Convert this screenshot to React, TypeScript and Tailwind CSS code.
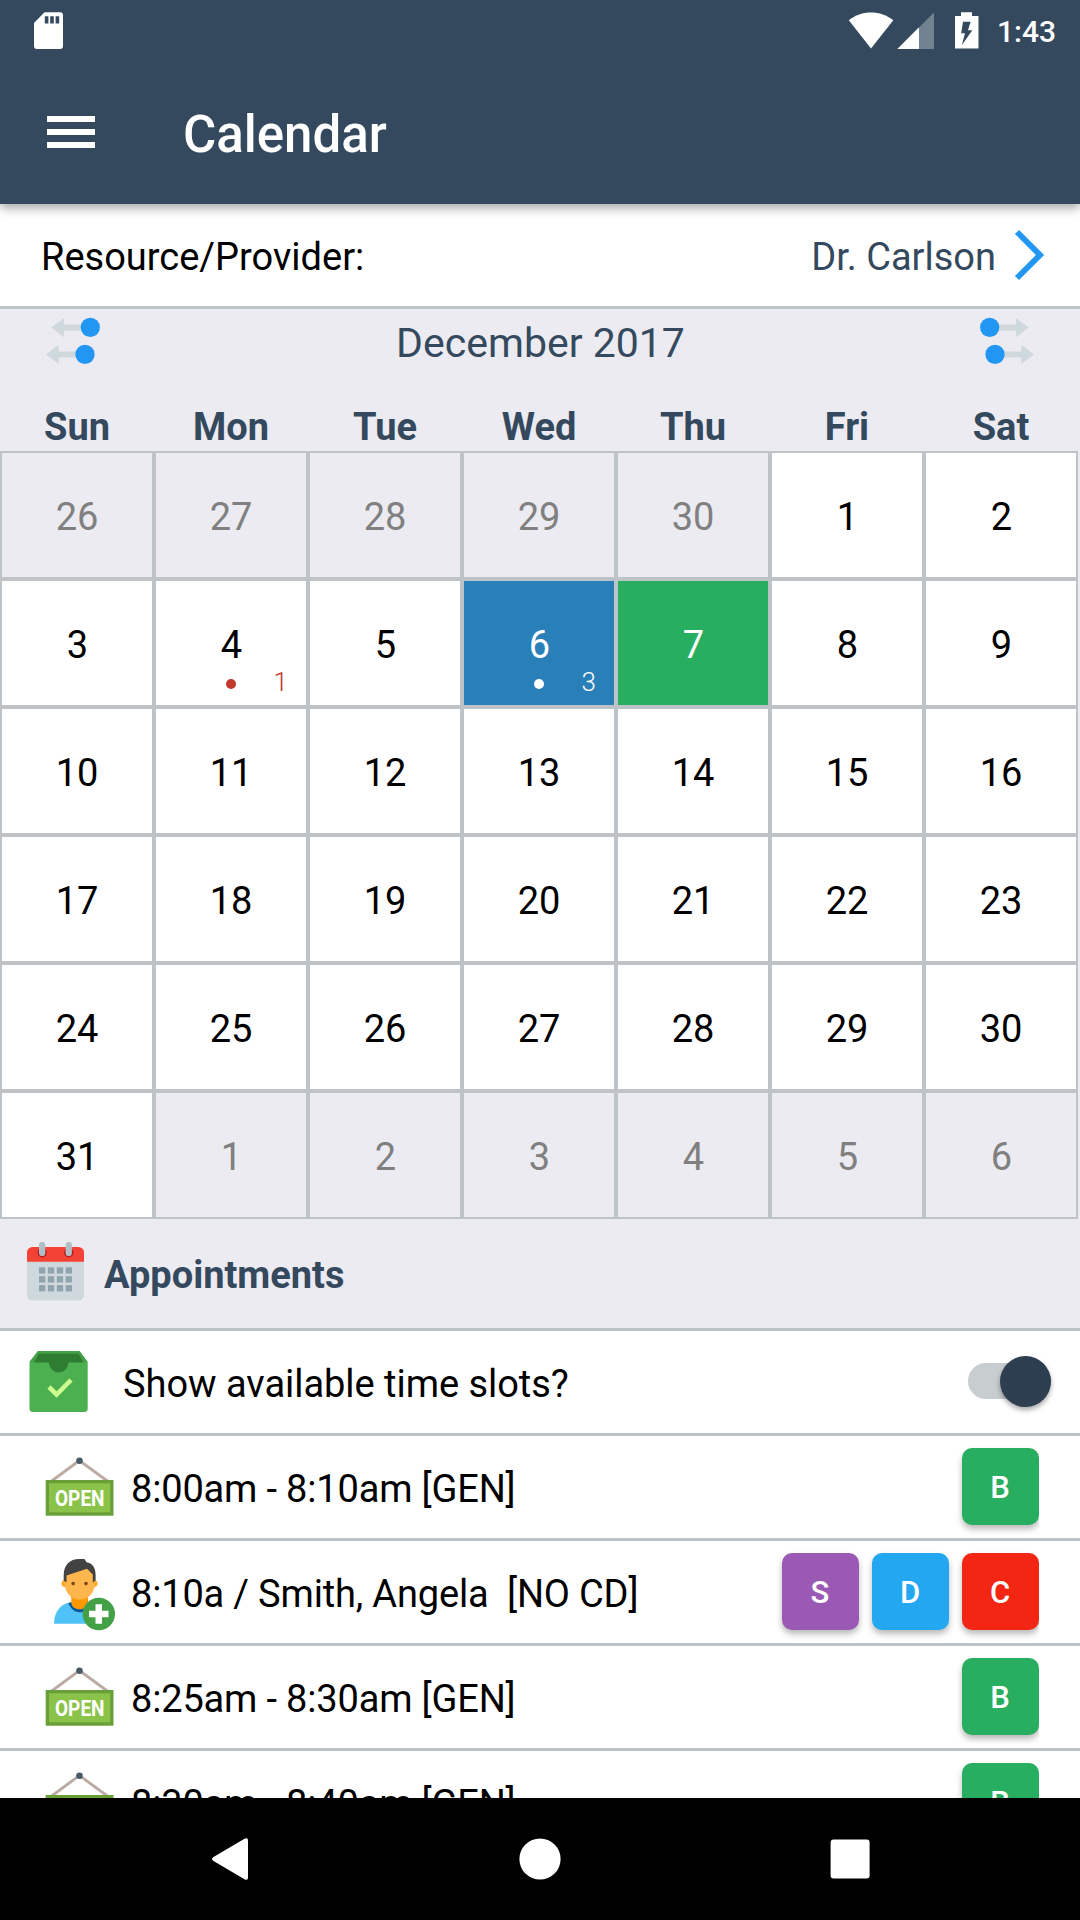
import React from "react";

type CellKind = "in" | "out" | "today" | "selected";
type Cell = { day: number; kind: CellKind; count?: number };

const days: Cell[] = [
  ...[26, 27, 28, 29, 30].map((day): Cell => ({ day, kind: "out" })),
  ...Array.from({ length: 31 }, (_, i): Cell => {
    const day = i + 1;
    if (day === 4) return { day, kind: "in", count: 1 };
    if (day === 6) return { day, kind: "today", count: 3 };
    if (day === 7) return { day, kind: "selected" };
    return { day, kind: "in" };
  }),
  ...[1, 2, 3, 4, 5, 6].map((day): Cell => ({ day, kind: "out" })),
];

const cellStyle: Record<CellKind, string> = {
  in: "bg-white text-black",
  out: "bg-[#ecebf1] text-[#808080]",
  today: "bg-[#2980b9] text-white",
  selected: "bg-[#27ae60] text-white",
};

function StatusBar() {
  return (
    <div className="flex h-[63px] items-start pl-[33px] pr-[24px] pt-[12px]">
      <svg className="h-[38px] w-[31px]" viewBox="33 12 31 38">
        <path
          fill="#fff"
          fillRule="evenodd"
          d="M44.5 12.3H60a3 3 0 0 1 3 3V46a3 3 0 0 1-3 3H37a3 3 0 0 1-3-3V23Zm.3 3.9v7.2h3.6v-7.2Zm5.4 0v7.2h3.6v-7.2Zm5.4 0v7.2h3.6v-7.2Z"
        />
      </svg>
      <svg className="ml-auto h-[38px] w-[134px]" viewBox="847 12 134 38">
        <path fill="#fff" d="M871 48.6 848.8 20.2C855 15 863 12.4 871 12.4S887 15 893.3 20.2Z" />
        <path fill="#718290" d="M919 27.5 934 12.4V49H919Z" />
        <path fill="#fff" d="M897.3 49 919 27.2V49Z" />
        <path
          fill="#fff"
          fillRule="evenodd"
          d="M961 12.3H972V16H978.5V48.6H955V16H961ZM963 21.7 961.2 33.3H965L961.8 45.3 972.3 30.3H968L970.6 21.7Z"
        />
      </svg>
      <div className="ml-[16px] mt-[2px] w-[59px] whitespace-nowrap text-[30px] font-medium leading-[36px] text-white">1:43</div>
    </div>
  );
}

function AppBar() {
  return (
    <header className="relative z-10 h-[204px] shrink-0 bg-[#34495e] shadow-[0_4px_10px_rgba(0,0,0,0.35)]">
      <StatusBar />
      <div className="flex h-[141px] items-center pl-[47px]">
        <div className="mb-[4px] flex w-[48px] flex-col gap-[7px]">
          <div className="h-[6px] bg-white" />
          <div className="h-[6px] bg-white" />
          <div className="h-[6px] bg-white" />
        </div>
        <h1 className="ml-[88px] mt-[3px] text-[51px] font-medium leading-[60px] text-white">Calendar</h1>
      </div>
    </header>
  );
}

function ShiftIcon({ flip }: { flip?: boolean }) {
  return (
    <svg className={flip ? "h-[48px] w-[56px] -scale-x-100" : "h-[48px] w-[56px]"} viewBox="45 317 56 48">
      <path fill="#cfd8dc" d="M51.3 327.6 64 318V324.6H85V330.6H64V337.3Z" />
      <path fill="#cfd8dc" d="M46 354.4 58.6 344.8V351.4H80V357.4H58.6V364Z" />
      <circle cx="90.3" cy="327.4" r="9.6" fill="#2196f3" />
      <circle cx="85" cy="354.4" r="9.6" fill="#2196f3" />
    </svg>
  );
}

function CalendarIcon() {
  return (
    <svg className="mb-[5px] h-[60px] w-[60px]" viewBox="26 1241 60 60">
      <path fill="#cfd8dc" d="M27 1260H84V1295a5.5 5.5 0 0 1-5.5 5.5H32.5a5.5 5.5 0 0 1-5.5-5.5Z" />
      <path fill="#f44336" d="M27 1261.8V1252.5a5.5 5.5 0 0 1 5.5-5.5H78.5a5.5 5.5 0 0 1 5.5 5.5V1261.8Z" />
      <circle cx="42.2" cy="1252.8" r="4.7" fill="#b71c1c" />
      <circle cx="68.8" cy="1252.8" r="4.7" fill="#b71c1c" />
      <rect x="39" y="1242" width="6.3" height="14" rx="3.1" fill="#b0bec5" />
      <rect x="65.6" y="1242" width="6.3" height="14" rx="3.1" fill="#b0bec5" />
      {[1267.3, 1276.2, 1285.1].map((y) =>
        [39, 47.9, 56.8, 65.7].map((x) => <rect key={`${x}-${y}`} x={x} y={y} width="6.3" height="6.3" fill="#90a4ae" />),
      )}
    </svg>
  );
}

function SlotsIcon() {
  return (
    <svg className="h-[64px] w-[60px]" viewBox="28 1350 60 64">
      <path fill="#4caf50" d="M38 1351H79.5L87.7 1362V1408.5a3.5 3.5 0 0 1-3.5 3.5H33a3.5 3.5 0 0 1-3.5-3.5V1362Z" />
      <path fill="#43a047" d="M38 1351H79.5L87.7 1362H80L77 1354H40L37 1362H29.5Z" />
      <path fill="#2e7d32" d="M39 1353.7H78.5L83.5 1362.5H68.5a9.8 9.8 0 0 1-19.6 0H34Z" />
      <path fill="none" stroke="#ccff90" strokeWidth="4.6" d="M49 1387 56.6 1394.6 71 1380" />
    </svg>
  );
}

function OpenSign() {
  return (
    <svg className="h-[62px] w-[72px]" viewBox="44 1456 72 62">
      <path fill="none" stroke="#bcaaa4" strokeWidth="2.8" d="M51 1481.5 79.4 1460.5 108 1481.5" />
      <circle cx="79.5" cy="1460.7" r="3.3" fill="#455a64" />
      <rect x="45.7" y="1480" width="67.8" height="35.7" fill="#689f38" />
      <rect x="49" y="1483.3" width="61.2" height="29" fill="#8bc34a" />
      <text
        x="55"
        y="1505.8"
        fill="#fff"
        fontFamily="Roboto"
        fontWeight="700"
        fontSize="22.5"
        textLength="49.5"
        lengthAdjust="spacingAndGlyphs"
      >
        OPEN
      </text>
    </svg>
  );
}

function PatientIcon() {
  return (
    <svg className="h-[74px] w-[64px]" viewBox="53 1558 64 74">
      <path fill="#4fc3f7" d="M54 1623.7C54 1610 63 1602.5 71 1602.5H88C97 1602.5 105 1610 105 1623.7Z" />
      <path fill="#01579b" d="M68.5 1603.3 71.3 1602H87.5L90.5 1603.5C88 1609.5 84 1612.3 79.5 1612.3S71 1609.5 68.5 1603.3Z" />
      <path fill="#ff9800" d="M71.3 1594H88V1602.5C88 1607 84 1609.3 79.6 1609.3S71.3 1607 71.3 1602.5Z" />
      <circle cx="65" cy="1583.6" r="3.5" fill="#ffa726" />
      <circle cx="94" cy="1583.6" r="3.5" fill="#ffa726" />
      <path fill="#ffb74d" d="M65 1573C65 1564 94.5 1562 94.5 1573V1584.7A14.75 14.75 0 0 1 65 1584.7Z" />
      <path
        fill="#424242"
        d="M79 1559C70 1559 63.7 1565 63.7 1575V1580.5L66.5 1582.5V1575.5L87 1568.7 92.8 1574.5V1582.5L95.6 1580.5V1575C95.6 1568 92.5 1563 86.5 1562.3L84.5 1559Z"
      />
      <circle cx="73.2" cy="1583.6" r="1.8" fill="#784719" />
      <circle cx="86" cy="1583.6" r="1.8" fill="#784719" />
      <circle cx="98.8" cy="1614" r="16.2" fill="#43a047" />
      <path fill="#fff" d="M95.5 1604.3H102V1610.8H108.5V1617.2H102V1623.7H95.5V1617.2H89V1610.8H95.5Z" />
    </svg>
  );
}

const tones = {
  green: "bg-[#27ae60]",
  purple: "bg-[#9b59b6]",
  blue: "bg-[#22a7f0]",
  red: "bg-[#f22613]",
};

type Action = { label: string; tone: keyof typeof tones };

const slots: { text: string; booked?: boolean; actions: Action[] }[] = [
  { text: "8:00am - 8:10am [GEN]", actions: [{ label: "B", tone: "green" }] },
  {
    text: "8:10a / Smith, Angela  [NO CD]",
    booked: true,
    actions: [
      { label: "S", tone: "purple" },
      { label: "D", tone: "blue" },
      { label: "C", tone: "red" },
    ],
  },
  { text: "8:25am - 8:30am [GEN]", actions: [{ label: "B", tone: "green" }] },
  { text: "8:30am - 8:40am [GEN]", actions: [{ label: "B", tone: "green" }] },
];

export default function App() {
  return (
    <div className="flex h-[1920px] w-[1080px] flex-col overflow-hidden bg-[#ecebf1] font-[Roboto,sans-serif] text-[38px] leading-[44px] text-black">
      <AppBar />

      <div className="flex h-[105px] shrink-0 items-center border-b-[3px] border-[#bdc3c7] bg-white pl-[41px] pr-[35px]">
        <span className="mt-[4px]">Resource/Provider:</span>
        <span className="ml-auto mt-[4px] text-[#34495e]">Dr. Carlson</span>
        <svg className="ml-[17px] h-[52px] w-[32px]" viewBox="1013 229 32 52">
          <path fill="none" stroke="#2196f3" strokeWidth="5.8" d="M1017 232 1040 255 1017 278" />
        </svg>
      </div>

      <div className="flex h-[142px] shrink-0 flex-col justify-between">
        <div className="flex items-start justify-between px-[45px] pt-[8px]">
          <ShiftIcon />
          <h2 className="mt-[2px] pl-px text-[41px] leading-[48px] text-[#34495e]">December 2017</h2>
          <ShiftIcon flip />
        </div>
        <div className="grid w-[1078px] grid-cols-7 pb-[2px] text-center font-bold text-[#34495e]">
          {["Sun", "Mon", "Tue", "Wed", "Thu", "Fri", "Sat"].map((d) => (
            <div key={d}>{d}</div>
          ))}
        </div>
      </div>

      <div className="grid w-[1078px] shrink-0 grid-cols-7">
        {days.map((c, i) => (
          <div
            key={i}
            className={`relative flex h-[128px] items-center justify-center border-2 border-[#bdc3c7] pt-[4px] ${c.day < 10 ? "pl-px" : ""} ${cellStyle[c.kind]}`}
          >
            {c.day}
            {c.count !== undefined && (
              <div className={c.kind === "today" ? "text-white" : "text-[#c0392b]"}>
                <span className="absolute bottom-[16px] left-[70px] size-[10px] rounded-full bg-current" />
                <span className="absolute bottom-[8px] right-[18px] text-[26px] font-light leading-[30px]">{c.count}</span>
              </div>
            )}
          </div>
        ))}
      </div>

      <div className="flex h-[112px] shrink-0 items-center border-b-[3px] border-[#bdc3c7] pl-[26px] font-bold text-[#34495e]">
        <CalendarIcon />
        <span className="ml-[18px] mt-[3px]">Appointments</span>
      </div>

      <div className="flex h-[105px] shrink-0 items-center border-b-[3px] border-[#bdc3c7] bg-white pl-[28px] pr-[29px]">
        <SlotsIcon />
        <span className="ml-[35px] mt-[4px] tracking-[-0.04px]">Show available time slots?</span>
        <div className="mb-[2px] ml-auto flex h-[36px] w-[83px] items-center justify-end rounded-full bg-[#c8cdd0]">
          <div className="size-[51px] shrink-0 rounded-full bg-[#2c3e50] shadow-[0_3px_5px_rgba(0,0,0,0.35)]" />
        </div>
      </div>

      <div className="h-[362px] shrink-0 overflow-hidden bg-white">
        {slots.map((s) => (
          <div key={s.text} className="flex h-[105px] items-center border-b-[3px] border-[#bdc3c7] pl-[44px] pr-[41px]">
            <div className="w-[87px]">
              {s.booked ? (
                <div className="pl-[9px] pt-[6px]">
                  <PatientIcon />
                </div>
              ) : (
                <OpenSign />
              )}
            </div>
            <span className="mt-[4px] whitespace-pre tracking-[-0.17px]">{s.text}</span>
            <div className="-my-[10px] -ml-[10px] ml-auto flex gap-[13px] overflow-hidden pb-[13px] pl-[10px] pt-[12px]">
              {s.actions.map((a) => (
                <div
                  key={a.label}
                  className={`flex size-[77px] items-center justify-center rounded-[10px] pr-px pt-[3px] text-[31px] font-medium text-white shadow-[0_4px_6px_rgba(0,0,0,0.28)] ${tones[a.tone]}`}
                >
                  {a.label}
                </div>
              ))}
            </div>
          </div>
        ))}
      </div>

      <nav className="flex h-[122px] shrink-0 items-center bg-black">
        <svg className="h-[44px] w-full" viewBox="0 1837 1080 44" fill="#fff">
          <path d="M213.5 1857 244.5 1838.8Q248 1837 248 1840.5V1877.5Q248 1881 244.5 1879.2L213.5 1861Q210.5 1859 213.5 1857Z" />
          <circle cx="540" cy="1859" r="20.6" />
          <rect x="830.6" y="1839.6" width="39" height="39" rx="3" />
        </svg>
      </nav>
    </div>
  );
}
